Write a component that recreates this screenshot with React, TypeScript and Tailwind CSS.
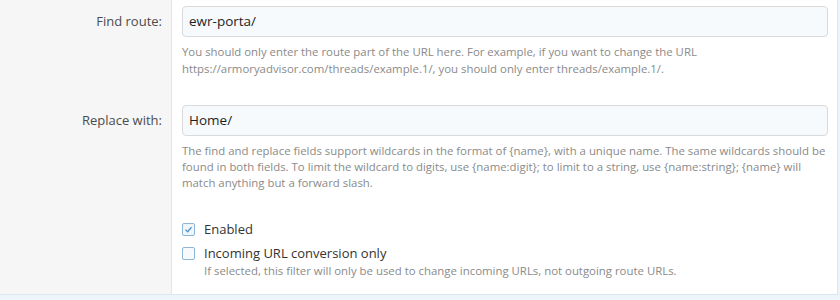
import React from "react";

const font = { fontFamily: '"Open Sans", "Noto Sans", sans-serif' };

function Row({ label, value, children }: { label: string; value: string; children: React.ReactNode }) {
  return (
    <div className="flex">
      <div className="w-[172px] shrink-0 bg-[#f6f6f6] border-r border-[#e4e4e4] pr-[9px] pt-[12px] text-right text-[13px] leading-[18px] text-[#4c4c4c]">
        {label}
      </div>
      <div className="flex-1 pl-[10px] pr-[9px]">
        <div className="mt-[6px] h-[31px] rounded-[4px] border border-[#dadada] bg-[#f6fafd] pl-[6px] text-[13.5px] leading-[29px] text-[#1e1e1e]">
          {value}
        </div>
        {children}
      </div>
    </div>
  );
}

export default function App() {
  return (
    <div className="w-[840px] h-[300px] overflow-hidden bg-[#edf4fa]" style={font}>
      <div className="flex h-[295px] w-[838px] flex-col border-b border-r border-[#dde6ee] bg-white">
        <Row label="Find route:" value="ewr-porta/">
          <p className="mt-[7px] text-[11.4px] leading-[16.5px] text-[#8a8a8a]">
            You should only enter the route part of the URL here. For example, if you want to change the URL
            <br />
            https://armoryadvisor.com/threads/example.1/, you should only enter threads/example.1/.
          </p>
          <div className="h-[22px]" />
        </Row>
        <Row label="Replace with:" value="Home/">
          <p className="mt-[7px] text-[11.4px] leading-[16px] text-[#8a8a8a]">
            The find and replace fields support wildcards in the format of {"{name}"}, with a unique name. The same wildcards should be
            <br />
            found in both fields. To limit the wildcard to digits, use {"{name:digit}"}; to limit to a string, use {"{name:string}"}; {"{name}"} will
            <br />
            match anything but a forward slash.
          </p>
        </Row>
        <div className="flex flex-1">
          <div className="w-[172px] shrink-0 bg-[#f6f6f6] border-r border-[#e4e4e4]" />
          <div className="flex-1 pl-[10px] pt-[29px]">
            <label className="flex items-center gap-[9px] text-[13px] leading-[18px] text-[#333]">
              <span className="flex h-[13px] w-[13px] items-center justify-center rounded-[2px] border border-[#8fb6d6] bg-[#eef5fb]">
                <svg viewBox="0 0 12 12" className="h-[9px] w-[9px]">
                  <path d="M2 6.2 L4.8 9 L10 3" fill="none" stroke="#4b8fc7" strokeWidth="1.6" />
                </svg>
              </span>
              Enabled
            </label>
            <label className="mt-[6px] flex items-center gap-[9px] text-[13px] leading-[18px] text-[#333]">
              <span className="h-[13px] w-[13px] rounded-[2px] border border-[#8fb6d6] bg-[#f6fafd]" />
              Incoming URL conversion only
            </label>
            <p className="mt-[1px] pl-[22px] text-[11.4px] leading-[16px] text-[#8a8a8a]">
              If selected, this filter will only be used to change incoming URLs, not outgoing route URLs.
            </p>
          </div>
        </div>
      </div>
    </div>
  );
}
